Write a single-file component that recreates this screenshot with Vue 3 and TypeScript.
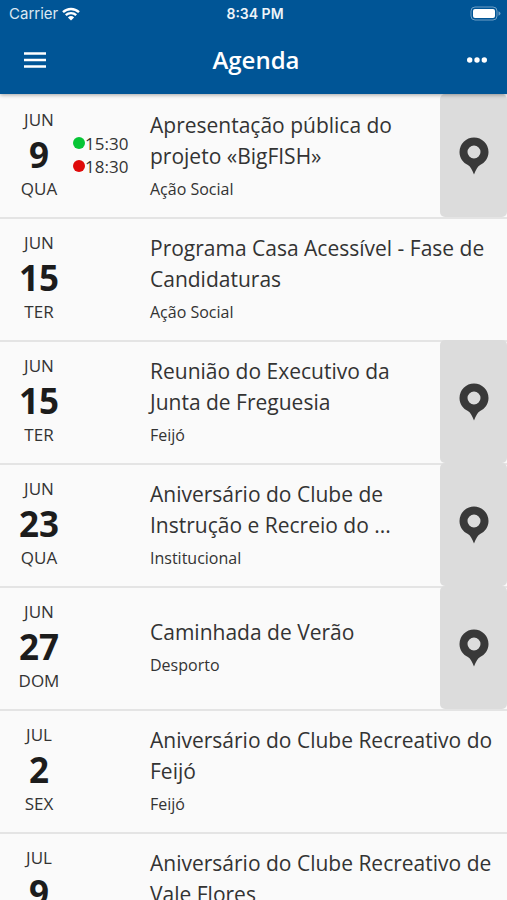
<script setup lang="ts">
interface AgendaEvent {
  month: string
  day: number
  weekday: string
  title: string
  category: string
  start?: string
  end?: string
  located: boolean
}

const events: AgendaEvent[] = [
  { month: 'JUN', day: 9, weekday: 'QUA', title: 'Apresentação pública do projeto «BigFISH»', category: 'Ação Social', start: '15:30', end: '18:30', located: true },
  { month: 'JUN', day: 15, weekday: 'TER', title: 'Programa Casa Acessível - Fase de Candidaturas', category: 'Ação Social', located: false },
  { month: 'JUN', day: 15, weekday: 'TER', title: 'Reunião do Executivo da Junta de Freguesia', category: 'Feijó', located: true },
  { month: 'JUN', day: 23, weekday: 'QUA', title: 'Aniversário do Clube de Instrução e Recreio do ...', category: 'Institucional', located: true },
  { month: 'JUN', day: 27, weekday: 'DOM', title: 'Caminhada de Verão', category: 'Desporto', located: true },
  { month: 'JUL', day: 2, weekday: 'SEX', title: 'Aniversário do Clube Recreativo do Feijó', category: 'Feijó', located: false },
  { month: 'JUL', day: 9, weekday: 'SEX', title: 'Aniversário do Clube Recreativo de Vale Flores', category: 'Feijó', located: false },
]
</script>

<template>
  <div class="screen">
    <header class="header">
      <div class="status">
        <span class="carrier">
          Carrier
          <svg class="wifi" viewBox="0 0 18 14" aria-hidden="true">
            <path d="M1 5.2a11.6 11.6 0 0 1 16 0" />
            <path d="M3.8 8.2a7.6 7.6 0 0 1 10.4 0" />
            <path class="solid" d="M9 13.6 5.9 10.4a4.5 4.5 0 0 1 6.2 0z" />
          </svg>
        </span>
        <span class="clock">8:34 PM</span>
        <svg class="battery" viewBox="0 0 31 15" aria-hidden="true">
          <rect class="shell" x="1" y="1" width="26" height="13" rx="4" />
          <rect class="charge" x="3" y="3" width="22" height="9" rx="2" />
          <path class="cap" d="M28.5 5.2q2 .9 2 2.3t-2 2.3z" />
        </svg>
      </div>
      <div class="toolbar">
        <button class="tool" type="button" aria-label="Menu">
          <svg class="menu-icon" viewBox="0 0 24 16" aria-hidden="true">
            <path d="M1 1.500h22M1 8h22M1 14.500h22" />
          </svg>
        </button>
        <h1 class="heading">Agenda</h1>
        <button class="tool more" type="button" aria-label="Mais opções">
          <svg class="more-icon" viewBox="0 0 20 6" aria-hidden="true">
            <circle cx="2.7" cy="3" r="2.7" />
            <circle cx="10" cy="3" r="2.7" />
            <circle cx="17.3" cy="3" r="2.7" />
          </svg>
        </button>
      </div>
    </header>

    <main class="main">
      <ul class="list">
        <li v-for="(event, index) in events" :key="index" class="row">
          <div class="date">
            <span class="label">{{ event.month }}</span>
            <strong class="day">{{ event.day }}</strong>
            <span class="label">{{ event.weekday }}</span>
          </div>
          <div class="hours">
            <span v-if="event.start" class="hour"><i class="dot opens"></i>{{ event.start }}</span>
            <span v-if="event.end" class="hour"><i class="dot closes"></i>{{ event.end }}</span>
          </div>
          <div class="info">
            <h2 class="title">{{ event.title }}</h2>
            <p class="category">{{ event.category }}</p>
          </div>
          <button v-if="event.located" class="place" type="button" aria-label="Ver no mapa">
            <svg class="pin" viewBox="0 0 30 38" aria-hidden="true">
              <path fill-rule="evenodd" d="M15 .5a14.5 14.5 0 0 1 14.500 14.500c0 6-3.700 10.800-8.400 13.100C18.200 29.800 17 33 15 37.500 13 33 11.800 29.800 8.900 28.100 4.200 25.800.5 21 .5 15A14.500 14.500 0 0 1 15 .5zM15 8.500a6.500 6.500 0 1 0 0 13 6.500 6.500 0 0 0 0-13z" />
            </svg>
          </button>
        </li>
      </ul>
    </main>
  </div>
</template>

<style>
body {
  margin: 0;
  background: #fafafa;
}
</style>

<style scoped>
.screen {
  height: 100vh;
  display: flex;
  flex-direction: column;
  overflow: hidden;
  background: #fafafa;
  color: #333;
  font-family: "Open Sans", "Noto Sans", sans-serif;
}

.header {
  flex: none;
  position: relative;
  background: #005596;
  color: #fff;
  box-shadow: 0 1px 4px rgba(0, 0, 0, 0.35);
}

.status {
  display: grid;
  grid-template-columns: 1fr auto 1fr;
  align-items: center;
  height: 27px;
  padding: 0 6px 0 9px;
  font-family: Inter, sans-serif;
  font-size: 15px;
}

.carrier {
  display: flex;
  align-items: center;
  gap: 4px;
  color: #dce8f2;
}

.wifi {
  width: 18px;
  height: 14px;
  fill: none;
  stroke: #fff;
  stroke-width: 2.4;
}

.wifi .solid {
  fill: #fff;
  stroke: none;
}

.clock {
  color: #eef4f9;
  font-size: 14px;
  font-weight: 600;
}

.battery {
  justify-self: end;
  width: 31px;
  height: 15px;
}

.shell {
  fill: none;
  stroke: #6e9fc5;
}

.charge {
  fill: #fff;
}

.cap {
  fill: #6e9fc5;
}

.toolbar {
  display: grid;
  grid-template-columns: 1fr auto 1fr;
  align-items: center;
  height: 65px;
  padding: 0 8px 2px 13px;
}

.tool {
  display: flex;
  align-items: center;
  justify-content: center;
  width: 44px;
  height: 44px;
  padding: 0;
  border: 0;
  background: none;
}

.more {
  justify-self: end;
}

.menu-icon {
  width: 24px;
  height: 16px;
  stroke: #fff;
  stroke-width: 2.4;
}

.more-icon {
  width: 20px;
  height: 6px;
  fill: #fff;
}

.heading {
  margin: 0;
  font-size: 24px;
  line-height: 32px;
  font-weight: 600;
}

.main {
  flex: 1;
  min-height: 0;
  overflow: hidden;
}

.list {
  margin: 0;
  padding: 0;
  list-style: none;
}

.row {
  display: flex;
  min-height: 123px;
}

.row + .row {
  background: linear-gradient(#e4e4e4, #e4e4e4) top / 100% 2px no-repeat;
}

.date {
  flex: none;
  display: flex;
  flex-direction: column;
  align-items: center;
  justify-content: center;
  width: 78px;
  padding-bottom: 2px;
}

.label {
  font-size: 17px;
  line-height: 24px;
}

.day {
  color: #1c1c1c;
  font-size: 35px;
  line-height: 45px;
  font-weight: 700;
}

.hours {
  flex: none;
  display: flex;
  flex-direction: column;
  justify-content: center;
  width: 72px;
  padding-bottom: 2px;
}

.hour {
  display: flex;
  align-items: center;
  margin-left: -5px;
  font-size: 17px;
  line-height: 23px;
}

.dot {
  width: 12px;
  height: 12px;
  border-radius: 50%;
}

.opens {
  background: #06c535;
}

.closes {
  background: #df0a0a;
}

.info {
  flex: 1;
  min-width: 0;
  display: flex;
  flex-direction: column;
  justify-content: center;
}

.title {
  margin: 0;
  font-size: 21px;
  line-height: 31px;
  font-weight: 400;
}

.category {
  margin: 4px 0 0;
  font-size: 16px;
  line-height: 26px;
}

.place {
  flex: none;
  display: flex;
  align-items: center;
  justify-content: center;
  width: 67px;
  padding: 0;
  border: 0;
  border-radius: 5px;
  background: #dcdcdc;
}

.pin {
  width: 30px;
  height: 38px;
  fill: #393939;
}
</style>
